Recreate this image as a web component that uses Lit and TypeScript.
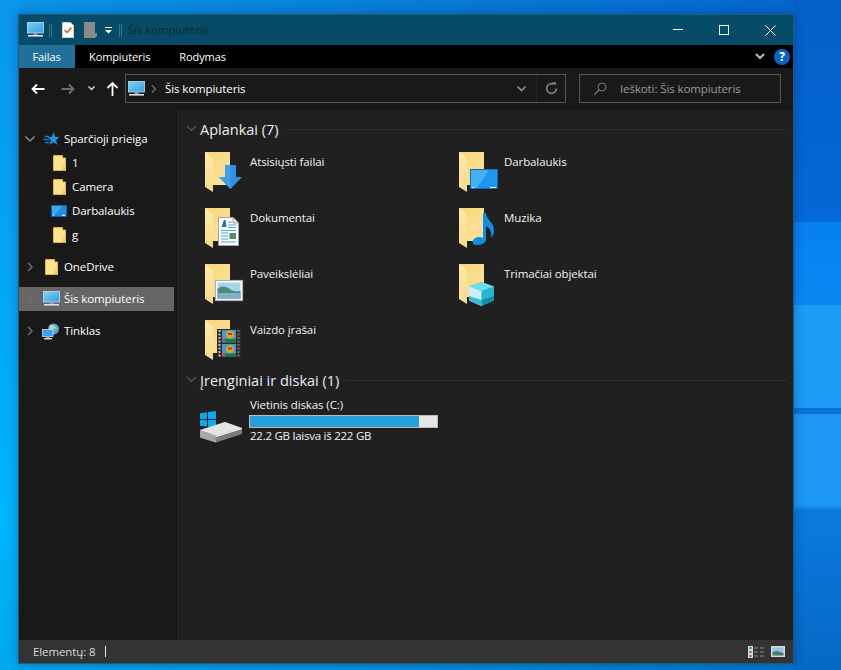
import { LitElement, html, css, svg } from "lit";
import { customElement } from "lit/decorators.js";

const pc = (w = 17, h = 16) => html`<svg width=${w} height=${h} viewBox="0 0 17 16">
  <defs><linearGradient id="scr" x1="0" y1="0" x2="1" y2="1"><stop offset="0" stop-color="#7fd2f7"/><stop offset="1" stop-color="#2f9fe0"/></linearGradient></defs>
  <rect x="0.5" y="0.5" width="16" height="10.5" fill="url(#scr)" stroke="#bfe0f0" stroke-width="0.8"/>
  <rect x="6.5" y="11.2" width="4" height="2" fill="#8fa3ad"/>
  <rect x="1" y="13" width="15" height="1.6" fill="#d8e4ea"/>
</svg>`;

const smallFolder = (w = 13, h = 16) => html`<svg width=${w} height=${h} viewBox="0 0 13 16">
  <path d="M0.5 0.5H9.5V3H12.5V15.5H0.5Z" fill="#fde28e" stroke="#e3b23c"/>
  <path d="M10 11H12.5V15.5H10Z" fill="#f4c94f"/>
</svg>`;

const desk = html`<svg width="16" height="12" viewBox="0 0 16 12">
  <rect x="0.5" y="0.5" width="15" height="11" fill="#1b8fe8" stroke="#0c63ad"/>
  <path d="M1 1H11L4 10H1Z" fill="#42a8f2"/>
  <path d="M2 10.3H3M11 10.3H14" stroke="#fff" stroke-width="1"/>
</svg>`;

const star = html`<svg width="17" height="16" viewBox="0 0 17 16">
  <path d="M10.5 1L12.2 6H16.5L13 9L14.5 14L10.5 11L6.5 14L8 9L4.5 6H8.8Z" fill="#1f95ea"/>
  <path d="M1.5 5.5H6M.5 8.5H6.5M2 11.5H6.5" stroke="#1f74c8" stroke-width="1.4"/>
</svg>`;

const net = html`<svg width="18" height="17" viewBox="0 0 18 17">
  <circle cx="11.5" cy="6" r="5.5" fill="#5aa5d8"/>
  <path d="M8 2.5C11 1 14 3 15 6C12 5 10 6 8.5 8C7 6 7 4 8 2.5Z" fill="#b5d9a5"/>
  <rect x="0.5" y="6.5" width="10.5" height="7" fill="#35a6ea" stroke="#bfe0f0" stroke-width="0.8"/>
  <rect x="4.5" y="13.5" width="3" height="1.5" fill="#8fa3ad"/>
  <rect x="2" y="15" width="8" height="1.4" fill="#d8e4ea"/>
</svg>`;

const chevR = html`<svg width="8" height="10" viewBox="0 0 8 10"><path d="M2 1L6 5L2 9" fill="none" stroke="#6f6f6f" stroke-width="1.5"/></svg>`;
const chevD = html`<svg width="12" height="8" viewBox="0 0 12 8"><path d="M1.5 1.5L6 6L10.5 1.5" fill="none" stroke="#8a8a8a" stroke-width="1.5"/></svg>`;
const chevS = html`<svg width="11" height="8" viewBox="0 0 11 8"><path d="M1 1L5.5 5.5L10 1" fill="none" stroke="#5a5a5a" stroke-width="1.1"/></svg>`;

const folderBase = svg`
  <path d="M1 0H26V33H1Z" fill="url(#fb)"/>
  <path d="M1 0L9 6V40L1 35Z" fill="url(#ff)"/>`;
const overlays: Record<string, unknown> = {
  down: svg`<path d="M21 13H32V25H38L26.5 37L15 25H21Z" fill="#2f8fe4"/><path d="M26.5 37L15 25H21V13H26.5Z" fill="#3c9eee"/>`,
  desk: svg`<rect x="12.5" y="17.5" width="27" height="19" fill="#1f97f0" stroke="#0b6db8"/><path d="M13 18H31L19 36H13Z" fill="#46b0f5"/><path d="M14 35.5H16M32 35.5H38" stroke="#fff"/>`,
  doc: svg`<path d="M14.5 9.5H29L34.5 15V37.5H14.5Z" fill="#fff" stroke="#9aa5ad"/><path d="M29 9.5V15H34.5" fill="#dfe5e9" stroke="#9aa5ad"/><path d="M17.5 19L20 12H21.5L22.5 19Z" fill="#1f6fc4"/><path d="M24 14H28M24 17H32M24 19.5H32M17 22.5H32M17 25H24M17 28H24M17 31H24M17 34H32" stroke="#4aa3dc" stroke-width="1.1"/><rect x="25.5" y="25" width="6.5" height="6" fill="#5a8a6f"/>`,
  music: svg`<path d="M25 5H28C28 12 36 14 36 22C36 25 35 28 33 30C34 25 32 20 28 18V31C28 36 22 37 18 37C14 37 14 33 16 31C19 28.5 23 28.5 25 30Z" fill="#0f8fe0"/>`,
  pic: svg`<rect x="11.5" y="16.5" width="27" height="20" fill="#fff" stroke="#b0b0b0" stroke-width="1.2"/><rect x="13.5" y="18.5" width="23" height="16" fill="#a9d5ec"/><path d="M13.5 25C17 21 23 22 27 26C30 27.5 33 27.5 36.5 27V34.5H13.5Z" fill="#4e8a7a"/><path d="M13.5 29H36.5V34.5H13.5Z" fill="#7fb0c8"/>`,
  cube: svg`<path d="M23.5 18L36 22.5V36.5L23.5 42L11 36.5V22.5Z" fill="#25b6d2"/><path d="M23.5 18L36 22.5L23.5 27L11 22.5Z" fill="#6fdcec"/><path d="M11 22.5L23.5 27V42L11 36.5Z" fill="#c8f0f6"/><path d="M23.5 36L36 32V36.5L23.5 42Z" fill="#0e8fb0"/><path d="M11 32L23.5 36V42L11 36.5Z" fill="#38bcd4"/>`,
  vid: svg`<rect x="13" y="9" width="24" height="28" fill="#2b2b2b"/><rect x="18" y="10" width="14" height="12.5" fill="#3d9ad8"/><rect x="18" y="24" width="14" height="12.5" fill="#3d9ad8"/><circle cx="26" cy="14.5" r="4" fill="#d9a41e"/><circle cx="26" cy="29" r="4" fill="#d9a41e"/><path d="M24 13H28V15H24ZM24 27.5H28V29.5H24Z" fill="#c7302a"/><path d="M18 19H32V22.5H18Z" fill="#1f7a3c"/><path d="M18 33.5H32V36.5H18Z" fill="#1f7a3c"/><path d="M18 18L22 22H18ZM18 32L22 36H18Z" fill="#e0457a"/><path d="M15.5 10V37" stroke="#d8c48a" stroke-width="2" stroke-dasharray="2 1.5"/><path d="M34.5 10V37" stroke="#777" stroke-width="2" stroke-dasharray="2 1.5"/>`,
};

const bigFolder = (k: string) => html`<svg width="40" height="42" viewBox="0 0 40 42">
  <defs>
    <linearGradient id="fb" x1="0" y1="0" x2="1" y2="1"><stop offset="0" stop-color="#f9d776"/><stop offset="1" stop-color="#fbe3a1"/></linearGradient>
    <linearGradient id="ff" x1="0" y1="0" x2="0" y2="1"><stop offset="0" stop-color="#fdebb0"/><stop offset="1" stop-color="#f8d98a"/></linearGradient>
  </defs>
  ${folderBase}${overlays[k]}
</svg>`;

const drive = html`<svg class="dicon" width="44" height="32" viewBox="0 0 44 32">
  <path d="M1 2.2L8 1.2V8H1ZM9 1L17 0V8H9ZM1 9H8V15.6L1 14.8ZM9 9H17V16.6L9 15.7Z" fill="#08aceb"/>
  <path d="M1 19L26 11L43 17V23L17 31.5L1 26.5Z" fill="#7d7d7d"/>
  <path d="M1 19L26 11L43 17L17 25Z" fill="#e4e4e4"/>
  <path d="M1 19L17 25V31.5L1 26.5Z" fill="#a9a9a9"/>
  <path d="M17 25L43 17V18L17 26Z" fill="#fff"/>
  <rect x="15" y="26.8" width="2" height="1.5" fill="#27c24c"/>
</svg>`;

const folders = [
  ["Atsisiųsti failai", "down"], ["Darbalaukis", "desk"],
  ["Dokumentai", "doc"], ["Muzika", "music"],
  ["Paveikslėliai", "pic"], ["Trimačiai objektai", "cube"],
  ["Vaizdo įrašai", "vid"],
];

@customElement("app-root")
export class AppRoot extends LitElement {
  static styles = css`
    :host {
      display: block; width: 841px; height: 670px; box-sizing: border-box; overflow: hidden;
      padding: 15px 48px 7px 19px;
      background:
        linear-gradient(180deg, #0460c8 0, #0468d8 222px, #0880f0 222px, #0a88f2 305px, #1e9cf5 305px, #1c9af5 408px, #0b70d6 408px, #0b70d6 414px, #1c98f4 414px, #1c98f4 505px, #0a7ae0 510px, #0668c4 670px) right / 48px 100% no-repeat,
        linear-gradient(180deg, #0a96ea 0, #00b4fb 520px, #00a8ee 670px) left / 19px 100% no-repeat,
        linear-gradient(90deg, #0a94e6, #0464c8) top / 100% 15px no-repeat,
        linear-gradient(90deg, #00a8ee, #0570d0) bottom / 100% 7px no-repeat;
      font-family: "Open Sans", "Noto Sans", sans-serif; font-size: 11.5px; letter-spacing: -0.1px; color: #fff;
    }
    svg { display: block; flex: none; }
    .win { height: 648px; display: flex; flex-direction: column; background: #191919; box-shadow: 0 0 10px rgba(0,20,60,.4); outline: 1px solid #1a5c7a; }
    .title { height: 30px; flex: none; background: #064c69; display: flex; align-items: center; padding-left: 8px; color: #0f2833; }
    .sep { height: 13px; width: 3px; border: 1px solid #3a6f85; border-width: 0 1px; box-sizing: border-box; flex: none; }
    .sep.a { margin: 0 10px 0 5px; }
    .sep.b { margin: 0 6px 0 7px; }
    .ml10 { margin-left: 10px; }
    .ml8 { margin-left: 8px; }
    .titletext { flex: 1; padding-bottom: 1px; }
    .wbtn { width: 46px; height: 30px; display: flex; align-items: center; justify-content: center; }
    .ribbon { height: 23px; flex: none; background: #000; display: flex; align-items: center; font-size: 11px; }
    .tab { height: 23px; display: flex; align-items: center; }
    .tab.file { width: 56px; box-sizing: border-box; padding-right: 1px; justify-content: center; background: #20709a; }
    .tab.k { margin-left: 14px; }
    .tab.r { margin-left: 29px; }
    .ribr { margin-left: auto; display: flex; align-items: center; gap: 9px; padding-right: 3px; }
    .help { width: 16px; height: 16px; border-radius: 50%; background: #0a62c4; font-weight: 700; font-size: 12px; display: flex; align-items: center; justify-content: center; line-height: 1; }
    .nav { height: 42px; flex: none; display: flex; align-items: center; box-sizing: border-box; padding-bottom: 1px; }
    .navbtns { width: 106px; display: flex; align-items: center; flex: none; }
    .back { margin-left: 12px; }
    .fwd { margin-left: 16px; }
    .rec { margin-left: 13px; }
    .up { margin-left: 10px; }
    .box { height: 29px; box-sizing: border-box; border: 1px solid #555; display: flex; align-items: center; }
    .addr { width: 441px; margin-right: 13px; flex: none; padding-left: 2px; }
    .addr .crumb { margin-left: 6px; margin-right: 8px; }
    .addr .txt { flex: 1; }
    .addr .dd { width: 30px; height: 27px; display: flex; align-items: center; justify-content: center; }
    .addr .rf { width: 28px; height: 27px; display: flex; align-items: center; justify-content: center; border-left: 1px solid #242424; }
    .search { width: 202px; flex: none; color: #9a9a9a; padding-left: 14px; gap: 13px; }
    .main { flex: 1; min-height: 0; display: flex; }
    .side { width: 157px; flex: none; padding-top: 17px; box-sizing: border-box; }
    .divider { width: 2px; flex: none; background: #141414; border-right: 1px solid #252525; box-sizing: border-box; }
    .row { height: 24px; display: flex; align-items: center; margin-right: 2px; }
    .row span { padding-bottom: 2px; }
    .row.sel { background: #666; }
    .row .cs { width: 22px; flex: none; display: flex; justify-content: center; }
    .row .is { width: 20px; flex: none; display: flex; justify-content: center; margin-right: 3px; }
    .row.l1 .cs { width: 32px; }
    .row.l1 .is { width: 16px; margin-right: 5px; }
    .gap { height: 8px; }
    .content { flex: 1; background: #202020; padding: 7px 6px 0 8px; }
    .hd { height: 24px; display: flex; align-items: center; font-size: 14.5px; letter-spacing: 0; color: #e6eef5; }
    .hd.second { margin-top: -8px; }
    .hd .c { width: 14px; flex: none; }
    .hd .ln { flex: 1; height: 1px; background: #2f2f2f; margin-left: 7px; }
    .grid { display: grid; grid-template-columns: 254px 254px; grid-auto-rows: 56px; padding: 11px 0 0 18px; }
    .item { display: flex; align-items: flex-start; gap: 6px; }
    .item span { margin-top: 2px; line-height: 16px; color: #f2f2f2; }
    .dr { display: flex; padding: 5px 0 0 13px; gap: 6px; }
    .dicon { margin-top: 14px; }
    .dinfo { display: flex; flex-direction: column; }
    .dinfo span { line-height: 16px; color: #f2f2f2; padding-left: 1px; }
    .dinfo .num { letter-spacing: -0.25px; }
    .bar { width: 189px; height: 13px; box-sizing: border-box; background: #e6e6e6; border: 1px solid #bcbcbc; margin-top: 2px; }
    .fill { height: 100%; background: #26a0da; }
    .status { height: 23px; flex: none; background: #333; display: flex; align-items: center; padding-left: 14px; color: #dcdcdc; }
    .cur { width: 1px; height: 11px; background: #e8e8e8; margin-left: 9px; }
    .sicons { margin-left: auto; display: flex; align-items: center; gap: 7px; padding-right: 8px; }
  `;

  row(label: string, icon: unknown, o: { chev?: unknown; l1?: boolean; sel?: boolean } = {}) {
    return html`<div class="row ${o.l1 ? "l1" : ""} ${o.sel ? "sel" : ""}">
      <div class="cs">${o.chev ?? ""}</div><div class="is">${icon}</div><span>${label}</span>
    </div>`;
  }

  render() {
    return html`<div class="win">
      <div class="title">
        ${pc()}
        <div class="sep a"></div>
        <svg width="12" height="16" viewBox="0 0 12 16"><path d="M0.5 0.5H8.5L11.5 3.5V15.5H0.5Z" fill="#fff" stroke="#d0d0d0"/><path d="M2.5 8L5 10.5L9.5 5.5" fill="none" stroke="#e0552b" stroke-width="1.5"/></svg>
        <svg class="ml10" width="13" height="16" viewBox="0 0 13 16"><path d="M0 0H11V11H13V14L11 16H0Z" fill="#8a8a8a"/></svg>
        <svg class="ml8" width="7" height="7" viewBox="0 0 7 7"><path d="M0 .5H7" stroke="#fff"/><path d="M0 3H7L3.5 6.5Z" fill="#fff"/></svg>
        <div class="sep b"></div>
        <div class="titletext">Šis kompiuteris</div>
        <div class="wbtn"><svg width="10" height="2" viewBox="0 0 10 2"><path d="M0 .5H10" stroke="#fff"/></svg></div>
        <div class="wbtn"><svg width="10" height="10" viewBox="0 0 10 10"><rect x=".5" y=".5" width="9" height="9" fill="none" stroke="#fff"/></svg></div>
        <div class="wbtn"><svg width="11" height="11" viewBox="0 0 11 11"><path d="M.5 .5L10.5 10.5M10.5 .5L.5 10.5" stroke="#fff"/></svg></div>
      </div>
      <div class="ribbon">
        <div class="tab file">Failas</div>
        <div class="tab k">Kompiuteris</div>
        <div class="tab r">Rodymas</div>
        <div class="ribr">
          <svg width="10" height="7" viewBox="0 0 10 7"><path d="M1 1L5 5L9 1" fill="none" stroke="#bdbdbd" stroke-width="2"/></svg>
          <div class="help">?</div>
        </div>
      </div>
      <div class="nav">
        <div class="navbtns">
          <svg class="back" width="14" height="14" viewBox="0 0 14 14"><path d="M6 2.5L1.5 7L6 11.5M2 7H13.5" fill="none" stroke="#fff" stroke-width="1.8"/></svg>
          <svg class="fwd" width="14" height="14" viewBox="0 0 14 14"><path d="M8 2.5L12.5 7L8 11.5M12 7H.5" fill="none" stroke="#6e6e6e" stroke-width="1.8"/></svg>
          <svg class="rec" width="7" height="5" viewBox="0 0 7 5"><path d="M.5 .5L3.5 3.5L6.5 .5" fill="none" stroke="#d8d8d8" stroke-width="1.5"/></svg>
          <svg class="up" width="15" height="15" viewBox="0 0 15 15"><path d="M2.5 7L7.5 2L12.5 7M7.5 2.5V15" fill="none" stroke="#fff" stroke-width="1.8"/></svg>
        </div>
        <div class="box addr">
          ${pc()}
          <svg class="crumb" width="6" height="8" viewBox="0 0 6 8"><path d="M1 .5L4.5 4L1 7.5" fill="none" stroke="#6f6f6f" stroke-width="1.3"/></svg>
          <div class="txt">Šis kompiuteris</div>
          <div class="dd"><svg width="9" height="6" viewBox="0 0 9 6"><path d="M.5 .5L4.5 4.5L8.5 .5" fill="none" stroke="#8a8a8a" stroke-width="1.6"/></svg></div>
          <div class="rf"><svg width="13" height="13" viewBox="0 0 12 12"><path d="M10.5 6A4.5 4.5 0 1 1 8 2" fill="none" stroke="#808080" stroke-width="1.6"/><path d="M6.5 0H10V3.5Z" fill="#808080"/></svg></div>
        </div>
        <div class="box search">
          <svg width="13" height="13" viewBox="0 0 13 13"><circle cx="8" cy="5" r="4" fill="none" stroke="#7d7d7d"/><path d="M5 8L.5 12.5" stroke="#7d7d7d" stroke-width="1.2"/></svg>
          <span>Ieškoti: Šis kompiuteris</span>
        </div>
      </div>
      <div class="main">
        <div class="side">
          ${this.row("Sparčioji prieiga", star, { chev: chevD })}
          ${this.row("1", smallFolder(), { l1: true })}
          ${this.row("Camera", smallFolder(), { l1: true })}
          ${this.row("Darbalaukis", desk, { l1: true })}
          ${this.row("g", smallFolder(), { l1: true })}
          <div class="gap"></div>
          ${this.row("OneDrive", smallFolder(), { chev: chevR })}
          <div class="gap"></div>
          ${this.row("Šis kompiuteris", pc(), { chev: chevR, sel: true })}
          <div class="gap"></div>
          ${this.row("Tinklas", net, { chev: chevR })}
        </div>
        <div class="divider"></div>
        <div class="content">
          <div class="hd"><div class="c">${chevS}</div><span>Aplankai (7)</span><div class="ln"></div></div>
          <div class="grid">
            ${folders.map(([n, k]) => html`<div class="item">${bigFolder(k)}<span>${n}</span></div>`)}
          </div>
          <div class="hd second"><div class="c">${chevS}</div><span>Įrenginiai ir diskai (1)</span><div class="ln"></div></div>
          <div class="dr">
            ${drive}
            <div class="dinfo">
              <span>Vietinis diskas (C:)</span>
              <div class="bar"><div class="fill" style="width:90.4%"></div></div>
              <span class="num">22.2 GB laisva iš 222 GB</span>
            </div>
          </div>
        </div>
      </div>
      <div class="status">
        <span>Elementų: 8</span><div class="cur"></div>
        <div class="sicons">
          <svg width="16" height="12" viewBox="0 0 16 12"><rect width="5" height="12" fill="#d8d8d8"/><rect x="1.5" y="1" width="2" height="2" fill="#3a8a4a"/><rect x="1.5" y="5" width="2" height="2" fill="#2f6fd8"/><rect x="1.5" y="9" width="2" height="2" fill="#d82f2f"/><path d="M6 2H10M12 2H16M6 6H10M12 6H16M6 10H10M12 10H16" stroke="#8a8a8a"/></svg>
          <svg width="14" height="11" viewBox="0 0 14 11"><rect width="14" height="11" fill="#dcdcdc"/><rect x="1.5" y="1.5" width="11" height="8" fill="#8fc4e8"/><path d="M1.5 6L6 5L12.5 7V9.5H1.5Z" fill="#4e7a6a"/></svg>
        </div>
      </div>
    </div>`;
  }
}
